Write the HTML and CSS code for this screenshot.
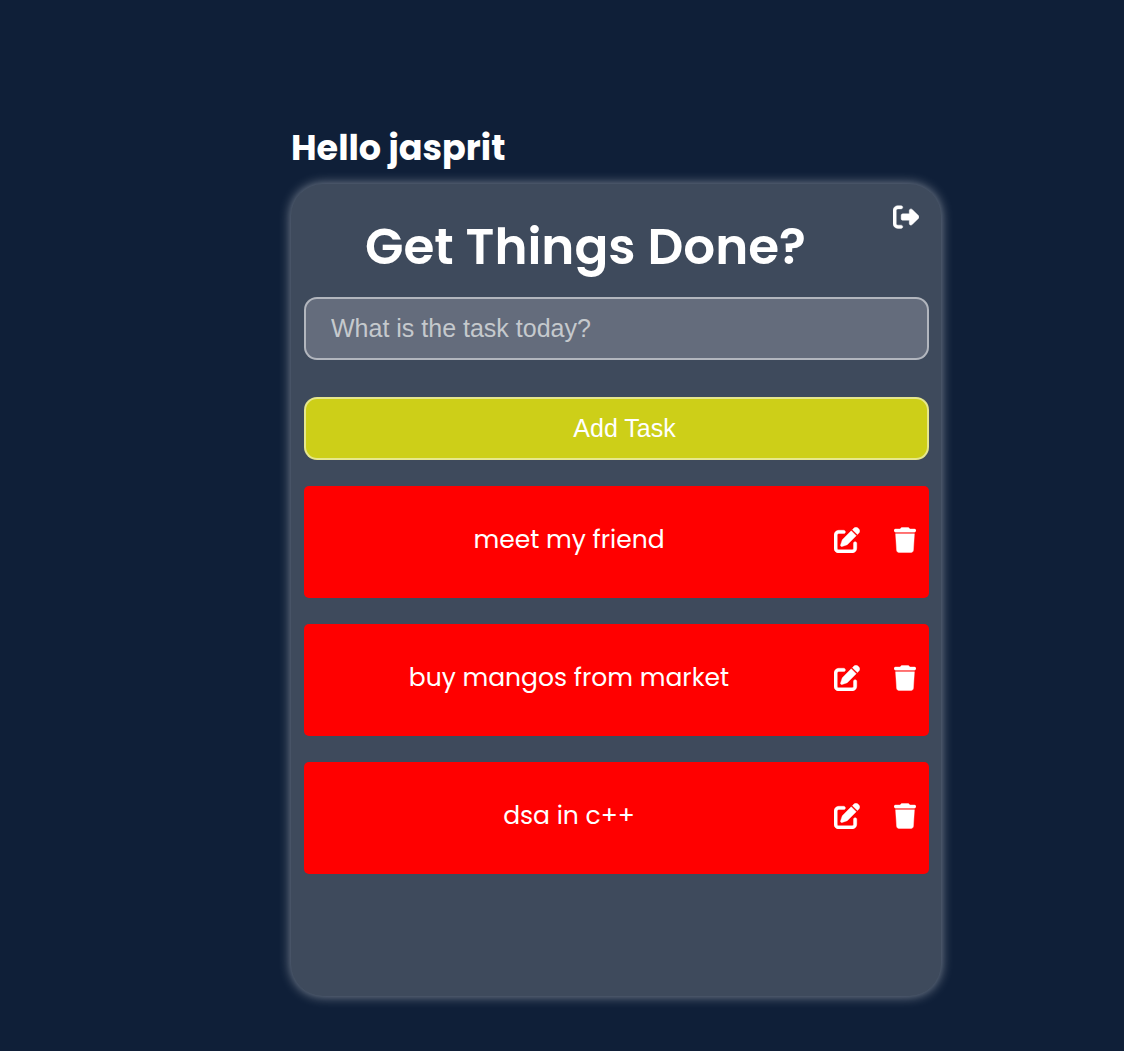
FILE: index.html
```html
<!DOCTYPE html>
<html lang="en">
<head>
  <meta charset="utf-8">
  <meta name="viewport" content="width=device-width, initial-scale=1">
  <title>Get Things Done</title>
  <link rel="stylesheet" href="styles.css">
</head>
<body>
  <svg class="sprite" aria-hidden="true">
    <symbol id="logout" viewBox="0 0 512 512"><path d="M377.9 105.9L500.7 228.7c7.2 7.2 11.3 17.1 11.3 27.3s-4.1 20.1-11.3 27.3L377.9 406.1c-6.4 6.4-15 9.9-24 9.9c-18.7 0-33.9-15.2-33.9-33.9l0-62.1-128 0c-17.7 0-32-14.3-32-32l0-64c0-17.7 14.3-32 32-32l128 0 0-62.1c0-18.7 15.2-33.9 33.9-33.9c9 0 17.6 3.6 24 9.9zM160 96L96 96c-17.7 0-32 14.3-32 32l0 256c0 17.7 14.3 32 32 32l64 0c17.7 0 32 14.3 32 32s-14.3 32-32 32l-64 0c-53 0-96-43-96-96L0 128C0 75 43 32 96 32l64 0c17.7 0 32 14.3 32 32s-14.3 32-32 32z"/></symbol>
    <symbol id="edit" viewBox="0 0 512 512"><path d="M471.6 21.7c-21.9-21.9-57.3-21.9-79.2 0L362.3 51.7l97.9 97.9 30.1-30.1c21.9-21.9 21.9-57.3 0-79.2L471.6 21.7zm-299.2 220c-6.1 6.1-10.8 13.6-13.5 21.9l-29.6 88.8c-2.9 8.6-.6 18.1 5.8 24.6s15.9 8.7 24.6 5.8l88.8-29.6c8.2-2.7 15.7-7.4 21.9-13.5L437.7 172.3 339.7 74.3 172.4 241.7zM96 64C43 64 0 107 0 160V416c0 53 43 96 96 96H352c53 0 96-43 96-96V320c0-17.7-14.3-32-32-32s-32 14.3-32 32v96c0 17.7-14.3 32-32 32H96c-17.7 0-32-14.3-32-32V160c0-17.7 14.3-32 32-32h96c17.7 0 32-14.3 32-32s-14.3-32-32-32H96z"/></symbol>
    <symbol id="trash" viewBox="0 0 448 512"><path d="M135.2 17.7L128 32H32C14.3 32 0 46.3 0 64S14.3 96 32 96H416c17.7 0 32-14.3 32-32s-14.3-32-32-32H320l-7.2-14.3C307.4 6.8 296.3 0 284.2 0H163.8c-12.1 0-23.2 6.8-28.6 17.7zM416 128H32L53.2 467c1.6 25.3 22.6 45 47.9 45H346.9c25.3 0 46.3-19.7 47.9-45L416 128z"/></symbol>
  </svg>
  <main class="page">
    <div class="app">
      <h2 class="greeting">Hello jasprit</h2>
      <section class="card">
        <header class="card-head">
          <h1 class="title">Get Things Done?</h1>
          <button class="icon-button" type="button" aria-label="Log out"><svg class="icon"><use href="#logout"/></svg></button>
        </header>
        <form class="form">
          <input class="field" type="text" placeholder="What is the task today?" aria-label="Task">
          <button class="add" type="button">Add Task</button>
        </form>
        <ul class="tasks">
          <li class="task">
            <span class="task-text">meet my friend</span>
            <button class="icon-button" type="button" aria-label="Edit meet my friend"><svg class="icon"><use href="#edit"/></svg></button>
            <button class="icon-button" type="button" aria-label="Delete meet my friend"><svg class="icon icon-trash"><use href="#trash"/></svg></button>
          </li>
          <li class="task">
            <span class="task-text">buy mangos from market</span>
            <button class="icon-button" type="button" aria-label="Edit buy mangos from market"><svg class="icon"><use href="#edit"/></svg></button>
            <button class="icon-button" type="button" aria-label="Delete buy mangos from market"><svg class="icon icon-trash"><use href="#trash"/></svg></button>
          </li>
          <li class="task">
            <span class="task-text">dsa in c++</span>
            <button class="icon-button" type="button" aria-label="Edit dsa in c++"><svg class="icon"><use href="#edit"/></svg></button>
            <button class="icon-button" type="button" aria-label="Delete dsa in c++"><svg class="icon icon-trash"><use href="#trash"/></svg></button>
          </li>
        </ul>
      </section>
    </div>
  </main>
</body>
</html>
```
FILE: styles.css
```css
* {
  box-sizing: border-box;
}

body {
  margin: 0;
  min-height: 100vh;
  background: #0f1f38;
  color: #fff;
  font-family: Poppins, Inter, sans-serif;
}

.sprite {
  display: none;
}

.page {
  display: flex;
  justify-content: center;
  padding: 120px 0 54px 108px;
}

.app {
  width: 100%;
  max-width: 650px;
}

.greeting {
  margin: 0 0 8px;
  font-size: 35px;
  line-height: 56px;
  font-weight: 700;
}

.card {
  padding: 20px 12px 122px 13px;
  border-radius: 32px;
  background: #3e4a5c;
  box-shadow: 0 0 12px rgba(255, 255, 255, 0.5);
}

.card-head {
  display: flex;
  align-items: flex-start;
  padding-right: 10px;
}

.title {
  flex: 1;
  margin: 0 26px 0 0;
  padding-top: 7px;
  font-size: 50px;
  line-height: 72px;
  font-weight: 600;
  text-align: center;
}

.icon-button {
  display: flex;
  padding: 0;
  border: 0;
  background: none;
  color: inherit;
  cursor: pointer;
}

.icon {
  width: 26px;
  height: 26px;
  overflow: visible;
  fill: currentColor;
  stroke: currentColor;
  stroke-width: 8px;
}

.icon-trash {
  width: 22px;
}

.form {
  display: flex;
  flex-direction: column;
  gap: 37px;
  padding-top: 14px;
}

.field,
.add {
  width: 100%;
  height: 63px;
  border: 2px solid rgba(255, 255, 255, 0.5);
  border-radius: 13px;
  font-family: "Liberation Sans", Arial, sans-serif;
  font-size: 25px;
  color: #fff;
}

.field {
  padding: 0 25px;
  background-color: #646c7c;
}

.field::placeholder {
  color: #c5c9cd;
  opacity: 1;
}

.add {
  padding: 0 8px 0 24px;
  background-color: #cdcf18;
  text-align: center;
  cursor: pointer;
}

.tasks {
  display: flex;
  flex-direction: column;
  gap: 26px;
  margin: 26px 0 0;
  padding: 0;
  list-style: none;
}

.task {
  display: flex;
  align-items: center;
  gap: 34px;
  min-height: 112px;
  padding: 0 13px 4px 34px;
  border-radius: 5px;
  background: #f00;
}

.task-text {
  flex: 1;
  font-size: 25px;
  line-height: 40px;
  text-align: center;
}
```
